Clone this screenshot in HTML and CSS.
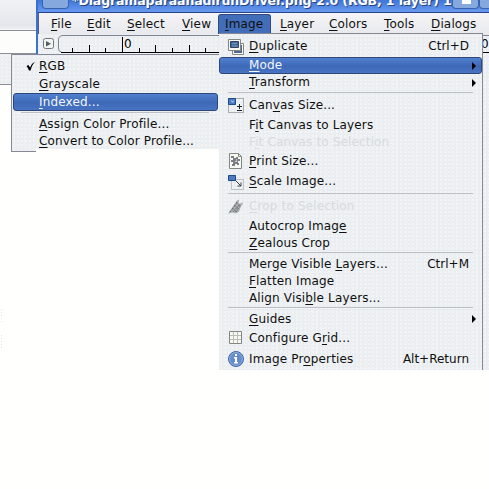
FILE: index.html
```html
<!DOCTYPE html>
<html lang="en">
<head>
<meta charset="utf-8">
<title>Image menu</title>
<link rel="stylesheet" href="styles.css">
</head>
<body>
<div class="desktop">
  <div class="back-window"><div class="back-title"></div><div class="back-body"></div><div class="back-panel"></div></div>
  <div class="edge-panel"></div>
  <div class="speck speck-a"></div><div class="speck speck-b"></div>

  <section class="window">
    <header class="titlebar">
      <span class="title-button title-icon"></span>
      <span class="title">*DiagramaparaanadirunDriver.png-2.0 (RGB, 1 layer) 1</span>
      <span class="title-button minimize"></span><span class="title-button maximize"></span>
    </header>
    <nav class="menubar">
      <span class="menu-name m-file"><u>F</u>ile</span>
      <span class="menu-name m-edit"><u>E</u>dit</span>
      <span class="menu-name m-select"><u>S</u>elect</span>
      <span class="menu-name m-view"><u>V</u>iew</span>
      <span class="menu-name m-image"><u>I</u>mage</span>
      <span class="menu-name m-layer"><u>L</u>ayer</span>
      <span class="menu-name m-colors"><u>C</u>olors</span>
      <span class="menu-name m-tools"><u>T</u>ools</span>
      <span class="menu-name m-dialogs"><u>D</u>ialogs</span>
    </nav>
    <div class="ruler-row">
      <svg class="corner" width="12" height="12" viewBox="0 0 12 12"><rect x=".5" y=".5" width="10" height="10" rx="2" fill="#f1f4f5" stroke="#73767c"/><path d="M3 3v5.500l5-2.750z" fill="#555a62"/></svg>
      <svg class="ruler" width="431" height="19" viewBox="0 0 431 19"><path d="M431 .5H5Q.5 .5 .5 5v8q0 4 3 4" fill="none" stroke="#7e8495"/><path d="M3 17.500h428M14.500 13v4M31.500 10v7M47.500 13v4M64.500 2v15M81.500 13v4M97.500 10v7M114.500 13v4M131.500 10v7M147.500 13v4" fill="none" stroke="#000"/><text x="66" y="13">0</text><text x="423" y="13">0</text></svg>
    </div>
  </section>

  <div class="menu submenu">
    <div class="item h-18"><span class="icon"><svg width="10" height="10" viewBox="0 0 10 10"><path d="M.5 5 2.500 4 4 6.500Q6 2 9 .5 6 4 4.500 9.500H3Q2 7 .5 5z"/></svg></span><span class="label"><u>R</u>GB</span></div>
    <div class="item h-18"><span class="icon"></span><span class="label"><u>G</u>rayscale</span></div>
    <div class="item h-18 active"><span class="icon"></span><span class="label"><u>I</u>ndexed...</span></div>
    <div class="separator"></div>
    <div class="item h-17 low"><span class="icon"></span><span class="label"><u>A</u>ssign Color Profile...</span></div>
    <div class="item h-17 low"><span class="icon"></span><span class="label"><u>C</u>onvert to Color Profile...</span></div>
  </div>
  <div class="submenu-corner"></div>

  <div class="menu main-menu">
    <div class="item h-21"><span class="icon"><svg width="16" height="16" viewBox="0 0 16 16"><path d="M4.500 4.500h11v11h-11z" fill="#f7f7f3" stroke="#858781"/><path d="M6 6h8v8H6z" fill="#4c6890"/><path d="M.5 .5h12v11H.5z" fill="#f7f7f3" stroke="#858781"/><path d="M2.500 2.500h8v6h-8z" fill="#3764a2" stroke="#34435c"/><path d="M4 5l2-1 1 1 2-1M4 7h6" stroke="#839db9" fill="none"/></svg></span><span class="label"><u>D</u>uplicate</span><span class="key">Ctrl+D</span></div>
    <div class="item h-17 active"><span class="icon"></span><span class="label"><u>M</u>ode</span><span class="arrow"></span></div>
    <div class="item h-17"><span class="icon"></span><span class="label"><u>T</u>ransform</span><span class="arrow"></span></div>
    <div class="separator"></div>
    <div class="item h-21"><span class="icon"><svg width="16" height="16" viewBox="0 0 16 16"><path d="M.5 .5h15v14H.5z" fill="none" stroke="#666b70" stroke-dasharray="1 1"/><path d="M.5 .5h7v6h-7z" fill="#4d7bc3" stroke="#204a87"/><path d="M3 3h1v1h1V3h1" stroke="#a7c4ed" fill="none"/><path d="M9 8.500h5M11.500 6v5M9 12.500h5" stroke="#222" fill="none"/></svg></span><span class="label">Can<u>v</u>as Size...</span></div>
    <div class="item h-18"><span class="icon"></span><span class="label">F<u>i</u>t Canvas to Layers</span></div>
    <div class="item h-17 disabled"><span class="icon"></span><span class="label">F<u>i</u>t Canvas to Selection</span></div>
    <div class="item h-20"><span class="icon"><svg width="16" height="16" viewBox="0 0 16 16"><path d="M1.500 .5h9l3 3v12h-12z" fill="#f7f7f4" stroke="#858781"/><path d="M10.500 .5v3h3" fill="none" stroke="#858781"/><path d="M3 3h3v2h2V4h2v2h2v2h-2v2h1v2H9v-1H7v2H4v-2h1V9H3V7h2V5H3z" fill="#7b7f83"/><path d="M8 6h1v3H7V8h1z" fill="#c6c9cb"/></svg></span><span class="label"><u>P</u>rint Size...</span></div>
    <div class="item h-21"><span class="icon"><svg width="16" height="16" viewBox="0 0 16 16"><path d="M3.500 5.500h12v10h-12z" fill="none" stroke="#8f979c" stroke-dasharray="1 1"/><path d="M.5 1.500h7v5h-7z" fill="#4d7bc3" stroke="#204a87"/><path d="M7 6l6 6m0-3.500V12h-3.500" stroke="#35444a" fill="none"/></svg></span><span class="label"><u>S</u>cale Image...</span></div>
    <div class="separator"></div>
    <div class="item h-21 disabled"><span class="icon"><svg width="16" height="16" viewBox="0 0 16 16"><path d="M0 14.500 9 1.500 11 .5 10.500 5l5-1.500-2.500 4-2 5-3 2-3-1z" fill="#a9adb0"/><path d="M2 13l7-9M5 13l6-7M8 13l4-6M4 9l5 4M6 6l5 4M8 3l5 4" stroke="#606569" stroke-dasharray="1 1" fill="none"/></svg></span><span class="label"><u>C</u>rop to Selection</span></div>
    <div class="item h-18"><span class="icon"></span><span class="label">Autocrop Imag<u>e</u></span></div>
    <div class="item h-16"><span class="icon"></span><span class="label"><u>Z</u>ealous Crop</span></div>
    <div class="separator"></div>
    <div class="item h-18"><span class="icon"></span><span class="label">Merge Visible <u>L</u>ayers...</span><span class="key">Ctrl+M</span></div>
    <div class="item h-16"><span class="icon"></span><span class="label"><u>F</u>latten Image</span></div>
    <div class="item h-17 low"><span class="icon"></span><span class="label">Align Visi<u>b</u>le Layers...</span></div>
    <div class="separator"></div>
    <div class="item h-18"><span class="icon"></span><span class="label"><u>G</u>uides</span><span class="arrow"></span></div>
    <div class="item h-20"><span class="icon"><svg width="16" height="16" viewBox="0 0 16 16"><path d="M1.500 1.500h12v12h-12z" fill="#f7f7f2" stroke="#858781"/><path d="M5.500 2v11M9.500 2v11M2 5.500h11M2 9.500h11" stroke="#babdb6"/></svg></span><span class="label">Configure G<u>r</u>id...</span></div>
    <div class="item h-22"><span class="icon"><svg width="16" height="16" viewBox="0 0 16 16"><circle cx="8" cy="8" r="7.500" fill="#648bcb" stroke="#3f67aa"/><circle cx="8" cy="8" r="6.400" fill="none" stroke="#91afe0"/><path d="M7 3h2v2H7zM6 6h3v5h1v1.500H6V11h1V7.500H6z" fill="#fff"/></svg></span><span class="label">Image Pr<u>o</u>perties</span><span class="key">Alt+Return</span></div>
  </div>
</div>
</body>
</html>
```

FILE: styles.css
```css
* { box-sizing: border-box; }
body { margin: 0; background: #fffffd; font-family: "DejaVu Sans", sans-serif; font-size: 12px; line-height: 16px; color: #101010; }
u { text-decoration: underline; text-decoration-thickness: 1px; text-underline-offset: 2px; text-decoration-skip-ink: none; }
.desktop { position: relative; width: 489px; height: 489px; overflow: hidden; }
.menu, .back-panel, .edge-panel, .ruler-row, .submenu-corner {
  background-color: #eaeef1;
  background-image: radial-gradient(circle, #f9f8f9 0.6px, transparent 0.8px), radial-gradient(circle, #f4f5f6 0.6px, transparent 0.8px);
  background-size: 4px 4px, 5px 3px;
}
.back-window { position: absolute; left: 0; top: 0; width: 36px; height: 85px; display: flex; flex-direction: column; }
.back-title { height: 31px; background: linear-gradient(#f1f2f6, #e5e6eb 26px, #f5f5f7); border-bottom: 1px solid #8c8f98; }
.back-body { height: 23px; background: #fdfdfc; border-bottom: 1px solid #8c8f98; }
.back-panel { flex: 1; border-bottom: 1px solid #8c8f98; }
.edge-panel { position: absolute; left: 483px; top: 53px; width: 6px; height: 317px; }
.speck { position: absolute; left: 0; width: 3px; height: 14px; background: radial-gradient(circle, #dce5ee 0.6px, transparent 0.9px) 0 0 / 3px 3px; }
.speck-a { top: 308px; }
.speck-b { top: 334px; }

.window { position: absolute; left: 36px; top: 0; width: 453px; height: 54px; border-left: 2px solid #3f70cc; }
.titlebar { display: flex; height: 13px; background: linear-gradient(#3f75d6, #6597ee 11px); border-bottom: 1px solid #29438a; }
.title { width: 382px; margin-left: 3px; margin-top: -7px; font-weight: bold; font-size: 12.5px; letter-spacing: -0.12px; color: #fff; text-shadow: 1px 1px #28457d; white-space: nowrap; }
.title-button { flex: none; width: 27px; height: 9px; border: 1px solid #3864af; border-top: 0; border-radius: 0 0 4px 4px; background: #85a8df; }
.title-icon { margin-left: 4px; }
.minimize { background: linear-gradient(#fff, #fff) 9px 0 / 9px 4px no-repeat #85a8df; }
.menubar { display: flex; height: 21px; background: linear-gradient(#f5f5f7, #e8e9ed); border-left: 1px solid #555f82; }
.menu-name { height: 20px; margin-top: 1px; padding-top: 2px; letter-spacing: 0.15px; white-space: nowrap; }
.m-file { width: 36px; margin-left: 12px; }
.m-edit { width: 40px; }
.m-select { width: 55px; }
.m-view { width: 36px; }
.m-image { width: 53px; padding-left: 6px; border: 1px solid #314b80; border-bottom: 0; border-radius: 3px 3px 0 0; background: #426db9; padding-top: 1px; }
.m-layer { width: 49px; padding-left: 9px; }
.m-colors { width: 55px; padding-left: 9px; }
.m-tools { width: 47px; padding-left: 9px; }
.m-dialogs { padding-left: 9px; }
.ruler-row { display: flex; height: 20px; padding-top: 1px; }
.corner { margin: 3px 3px 0 5px; flex: none; }
.ruler { flex: none; font-size: 12px; }

.menu { position: absolute; display: flex; flex-direction: column; }
.main-menu { left: 219px; top: 33px; width: 264px; height: 337px; padding: 2px 0 0; border-top: 1px solid #858997; border-right: 1px solid #858997; }
.submenu { left: 11px; top: 54px; width: 209px; height: 95px; padding-top: 2px; padding-right: 1px; border: 1px solid #858997; border-bottom: 0; }
.submenu-corner { position: absolute; left: 11px; top: 149px; width: 25px; height: 3px; border-left: 1px solid #858997; border-bottom: 1px solid #858997; }
.item { display: flex; align-items: center; flex: none; white-space: nowrap; }
.main-menu .item { padding-left: 9px; padding-right: 13px; }
.submenu .item { padding-left: 13px; margin-left: 1px; }
.icon { display: flex; flex: none; }
.main-menu .icon { width: 21px; }
.submenu .icon { width: 13px; }
.label { flex: 1; letter-spacing: 0.15px; }
.h-17 .label, .h-21 .label, .h-21 .key { margin-bottom: 1px; }
.low .label { margin-bottom: 0; }
.active { color: #f4f6fd; background: linear-gradient(#5180cf, #3d69b7 55%, #4773c3); border: 1px solid #2e4778; border-radius: 3px; }
.main-menu .active { padding-left: 8px; padding-right: 12px; }
.submenu .active { padding-left: 12px; }
.arrow { width: 0; height: 0; margin-right: -7px; border-left: 4px solid #000; border-top: 4px solid transparent; border-bottom: 4px solid transparent; }
.separator { flex: none; height: 4px; padding-top: 1px; margin: 0 9px; }
.separator::before { content: ""; display: block; height: 1px; background: #bcc0c7; }
.disabled { color: #d7dadf; }
.h-16 { height: 16px; }
.h-17 { height: 17px; }
.h-18 { height: 18px; }
.h-20 { height: 20px; }
.h-21 { height: 21px; }
.h-22 { height: 22px; }
```
